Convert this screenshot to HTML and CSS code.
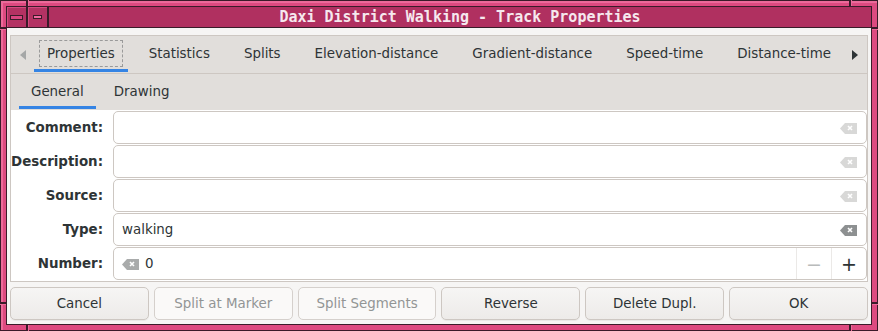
FILE: index.html
```html
<!DOCTYPE html>
<html lang="en">

<head>
    <meta charset="UTF-8">
    <title>Daxi District Walking - Track Properties</title>
    <link rel="stylesheet" href="styles.css">
</head>

<body>
    <div class="window">
        <!-- frame corner handles -->
        <span class="notch top left-x"></span>
        <span class="notch top right-x"></span>
        <span class="notch bottom left-x"></span>
        <span class="notch bottom right-x"></span>
        <span class="notch side left top-y"></span>
        <span class="notch side right top-y"></span>
        <span class="notch side left bottom-y"></span>
        <span class="notch side right bottom-y"></span>

        <div class="frame">
            <!-- Title bar -->
            <div class="titlebar">
                <div class="tb-button"><span class="tb-icon wide"></span></div>
                <div class="tb-button"><span class="tb-icon small"></span></div>
                <div class="title">Daxi District Walking - Track Properties</div>
            </div>

            <div class="client">
                <div class="notebook">
                    <div class="tabs">
                        <span class="arrow left"></span>
                        <div class="tab-list">
                            <div class="tab active"><span class="focus">Properties</span></div>
                            <div class="tab">Statistics</div>
                            <div class="tab">Splits</div>
                            <div class="tab">Elevation-distance</div>
                            <div class="tab">Gradient-distance</div>
                            <div class="tab">Speed-time</div>
                            <div class="tab">Distance-time</div>
                        </div>
                        <span class="arrow right"></span>
                    </div>

                    <div class="page">
                        <div class="subtabs">
                            <div class="subtab active">General</div>
                            <div class="subtab">Drawing</div>
                        </div>

                        <div class="form">
                            <label>Comment:</label>
                            <div class="entry"><span class="text"></span>
                                <svg class="clear" width="17" height="11" viewBox="0 0 17 11"><path d="M5 0H17V11H5L0 5.5Z"/><path d="M8 3L12 7M12 3L8 7" stroke="#fff" stroke-width="1.6"/></svg>
                            </div>

                            <label>Description:</label>
                            <div class="entry"><span class="text"></span>
                                <svg class="clear" width="17" height="11" viewBox="0 0 17 11"><path d="M5 0H17V11H5L0 5.5Z"/><path d="M8 3L12 7M12 3L8 7" stroke="#fff" stroke-width="1.6"/></svg>
                            </div>

                            <label>Source:</label>
                            <div class="entry"><span class="text"></span>
                                <svg class="clear" width="17" height="11" viewBox="0 0 17 11"><path d="M5 0H17V11H5L0 5.5Z"/><path d="M8 3L12 7M12 3L8 7" stroke="#fff" stroke-width="1.6"/></svg>
                            </div>

                            <label>Type:</label>
                            <div class="entry"><span class="text">walking</span>
                                <svg class="clear dark" width="17" height="11" viewBox="0 0 17 11"><path d="M5 0H17V11H5L0 5.5Z"/><path d="M8 3L12 7M12 3L8 7" stroke="#fff" stroke-width="1.6"/></svg>
                            </div>

                            <label>Number:</label>
                            <div class="entry spin">
                                <svg class="clear mid" width="17" height="11" viewBox="0 0 17 11"><path d="M5 0H17V11H5L0 5.5Z"/><path d="M8 3L12 7M12 3L8 7" stroke="#fff" stroke-width="1.6"/></svg>
                                <span class="text">0</span>
                                <span class="spin-btn disabled">&minus;</span>
                                <span class="spin-btn">+</span>
                            </div>
                        </div>
                    </div>
                </div>

                <div class="buttons">
                    <button>Cancel</button>
                    <button disabled>Split at Marker</button>
                    <button disabled>Split Segments</button>
                    <button>Reverse</button>
                    <button>Delete Dupl.</button>
                    <button>OK</button>
                </div>
            </div>
        </div>
    </div>
</body>

</html>
```

FILE: styles.css
```css
body {
    margin: 0;
    padding: 0;
    background-color: #3a1b29;
    font-family: "DejaVu Sans", sans-serif;
    font-size: 13.4px;
    color: #2e3436;
}

/* Window manager frame */
.window {
    position: relative;
    width: 878px;
    height: 331px;
    box-sizing: border-box;
    padding: 6px;
    background-color: #dd4a80;
    box-shadow: inset 0 0 0 1px #3a1b29, inset 1px 1px 0 2px #ec6a9a;
}

.notch {
    position: absolute;
    background-color: #3a1b29;
    box-shadow: 1px 0 0 #ec6a9a;
}

.notch.top,
.notch.bottom {
    width: 2px;
    height: 6px;
}

.notch.top {
    top: 0;
}

.notch.bottom {
    bottom: 0;
}

.notch.left-x {
    left: 26px;
}

.notch.right-x {
    left: 849px;
}

.notch.side {
    width: 6px;
    height: 2px;
    box-shadow: 0 1px 0 #ec6a9a;
}

.notch.side.left {
    left: 0;
}

.notch.side.right {
    right: 0;
}

.notch.top-y {
    top: 27px;
}

.notch.bottom-y {
    top: 302px;
}

.frame {
    height: 100%;
    box-sizing: border-box;
    border: 1px solid #3a1b29;
    display: flex;
    flex-direction: column;
}

.titlebar {
    height: 20px;
    flex: none;
    display: flex;
    background-color: #b03060;
    border-bottom: 1px solid #3a1b29;
}

.tb-button {
    width: 19px;
    display: flex;
    align-items: center;
    justify-content: center;
    background-color: #b43263;
    border-right: 2px solid #3a1b29;
    box-shadow: inset 1px 1px 0 #d24c80;
}

.tb-icon {
    display: block;
    height: 3px;
    background-color: #d94680;
    border: 1px solid #3a1b29;
}

.tb-icon.wide {
    width: 11px;
}

.tb-icon.small {
    width: 7px;
    height: 2px;
    background-color: #f06aa0;
}

.title {
    flex: 1;
    text-align: center;
    font-family: "DejaVu Sans Mono", monospace;
    font-weight: bold;
    font-size: 15px;
    line-height: 20px;
    color: #f6e8ee;
}

.client {
    flex: 1;
    background-color: #f6f5f4;
    padding: 7px 3px 4px 3px;
    display: flex;
    flex-direction: column;
}

/* Notebook */
.notebook {
    border: 1px solid #cdc7c2;
    display: flex;
    flex-direction: column;
}

.tabs {
    height: 37px;
    display: flex;
    background-color: #e1dedb;
    border-bottom: 1px solid #cdc7c2;
}

.arrow {
    width: 23px;
    flex: none;
    display: flex;
    align-items: center;
    justify-content: center;
}

.arrow::before {
    content: "";
    border-top: 5px solid transparent;
    border-bottom: 5px solid transparent;
}

.arrow.left::before {
    border-right: 6px solid #a5a7a7;
}

.arrow.right {
    width: 25px;
    margin-left: auto;
}

.arrow.right::before {
    border-left: 6px solid #2e3436;
}

.tab-list {
    display: flex;
    gap: 8px;
    overflow: hidden;
}

.tab {
    padding: 2px 13px 0 13px;
    height: 31px;
    display: flex;
    align-items: center;
    white-space: nowrap;
    border-bottom: 3px solid transparent;
    color: #2e3436;
}

.tab.active {
    border-bottom-color: #3584e4;
}

.focus {
    padding: 5px 7px 5px 7px;
    margin: 0 -8px;
    border: 1px dashed #9a9a9a;
}

.page {
    display: flex;
    flex-direction: column;
}

.subtabs {
    height: 36px;
    display: flex;
    gap: 6px;
    padding-left: 8px;
    background-color: #e1dedb;
}

.subtab {
    padding: 2px 12px 0 12px;
    height: 30px;
    display: flex;
    align-items: center;
    border-bottom: 3px solid transparent;
}

.subtab.active {
    border-bottom-color: #3584e4;
}

/* Form */
.form {
    background-color: #fff;
    padding: 1px 0 1px 0;
    display: grid;
    grid-template-columns: 92px 1fr;
    grid-auto-rows: 33px;
    column-gap: 10px;
    row-gap: 1px;
}

.form label {
    font-weight: bold;
    text-align: right;
    align-self: center;
    color: #2e3436;
}

.entry {
    border: 1px solid #cdc7c2;
    border-radius: 5px;
    display: flex;
    align-items: center;
    padding: 0 9px 0 8px;
    background-color: #fff;
}

.entry .text {
    flex: 1;
}

.clear {
    fill: #d8d8d7;
    margin-top: 1px;
}

.clear.dark {
    fill: #8d9091;
}

.clear.mid {
    fill: #a9abab;
}

.spin {
    padding-right: 0;
}

.spin .clear {
    margin-right: 6px;
}

.spin-btn {
    width: 34px;
    align-self: stretch;
    display: flex;
    align-items: center;
    justify-content: center;
    border-left: 1px solid #ebe9e7;
    font-size: 19px;
    color: #2e3436;
}

.spin-btn.disabled {
    color: #b9bbbb;
}

/* Dialog buttons */
.buttons {
    margin-top: 5px;
    display: flex;
    gap: 5px;
}

button {
    flex: 1;
    height: 33px;
    font-family: "DejaVu Sans", sans-serif;
    font-size: 13.4px;
    color: #2e3436;
    background: linear-gradient(#f6f5f4, #edebe9);
    border: 1px solid #cdc7c2;
    border-radius: 5px;
    box-shadow: 0 1px 0 rgba(0, 0, 0, 0.05);
}

button:disabled {
    color: #929595;
    background: #faf9f8;
    border-color: #d5d0cc;
    box-shadow: none;
}
```
